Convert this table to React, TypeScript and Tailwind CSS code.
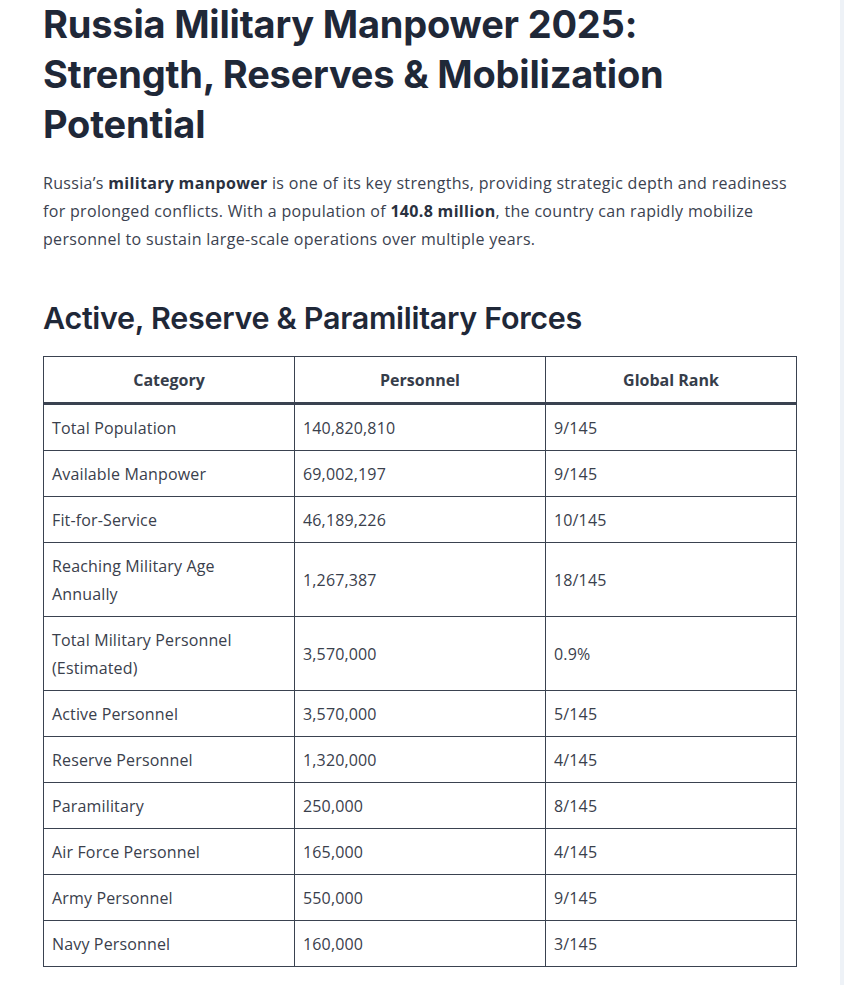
const rows: [string, string, string][] = [
  ["Total Population", "140,820,810", "9/145"],
  ["Available Manpower", "69,002,197", "9/145"],
  ["Fit-for-Service", "46,189,226", "10/145"],
  ["Reaching Military Age\nAnnually", "1,267,387", "18/145"],
  ["Total Military Personnel\n(Estimated)", "3,570,000", "0.9%"],
  ["Active Personnel", "3,570,000", "5/145"],
  ["Reserve Personnel", "1,320,000", "4/145"],
  ["Paramilitary", "250,000", "8/145"],
  ["Air Force Personnel", "165,000", "4/145"],
  ["Army Personnel", "550,000", "9/145"],
  ["Navy Personnel", "160,000", "3/145"],
];

const heading = { fontFamily: "Inter, 'Noto Sans', sans-serif" };
const body = { fontFamily: "'Open Sans', 'Noto Sans', sans-serif" };

export default function App() {
  return (
    <div className="flex min-h-[985px] bg-white">
      <main className="flex-1 pl-[43px] pr-[43px]">
        <div className="w-[754px]">
          <h1
            style={heading}
            className="text-[38px] font-bold leading-[50px] tracking-[-0.2px] text-[#1f2838] -mt-px"
          >
            Russia Military Manpower 2025:
            <br />
            Strength, Reserves &amp; Mobilization
            <br />
            Potential
          </h1>

          <p style={body} className="mt-5 text-[16px] leading-[28px] text-[#3b4250] tracking-[0.32px]">
            Russia’s <strong className="font-bold text-[#2a3140]">military manpower</strong> is one of its key
            strengths, providing strategic depth and readiness
            <br />
            for prolonged conflicts. With a population of{" "}
            <strong className="font-bold text-[#2a3140]">140.8 million</strong>, the country can rapidly mobilize
            <br />
            personnel to sustain large-scale operations over multiple years.
          </p>

          <h2
            style={heading}
            className="mt-[45px] text-[30.5px] font-semibold leading-[40px] tracking-[-0.3px] text-[#1f2838]"
          >
            Active, Reserve &amp; Paramilitary Forces
          </h2>

          <table
            style={body}
            className="mt-[18px] w-full table-fixed border-collapse border border-[#3a4250] text-[16px] text-[#3a404c]"
          >
            <thead>
              <tr>
                {["Category", "Personnel", "Global Rank"].map((h) => (
                  <th
                    key={h}
                    className="border border-b-[3px] border-[#3a4250] px-2 py-[8.5px] text-center text-[16px] font-bold leading-[28px] text-[#363d4a]"
                  >
                    {h}
                  </th>
                ))}
              </tr>
            </thead>
            <tbody>
              {rows.map((r) => (
                <tr key={r[0]}>
                  {r.map((c, i) => (
                    <td
                      key={i}
                      className="whitespace-pre-line border border-[#3a4250] px-2 py-[8.5px] text-left align-middle leading-[28px] tracking-[0.15px]"
                    >
                      {c}
                    </td>
                  ))}
                </tr>
              ))}
            </tbody>
          </table>
        </div>
      </main>
      <div className="w-[4px] bg-[#eef2f7]" />
    </div>
  );
}
